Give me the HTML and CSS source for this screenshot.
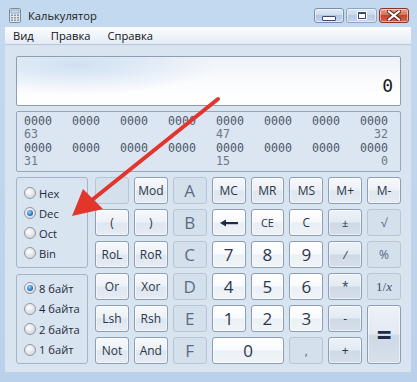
FILE: index.html
```html
<!DOCTYPE html>
<html lang="ru">
<head>
  <meta charset="UTF-8">
  <meta name="viewport" content="width=device-width, initial-scale=1.0">
  <link rel="stylesheet" href="styles.css">
  <title>Калькулятор</title>
</head>
<body>
  <div class="window">

    <!-- title bar -->
    <div class="titlebar">
      <svg class="app-icon" width="12" height="15" viewBox="0 0 12 15">
        <rect x="0.5" y="0.5" width="11" height="14" rx="1" fill="#dfe6ee" stroke="#7d8a99"/>
        <rect x="2" y="2" width="8" height="3" fill="#bfe0f7" stroke="#6f8aa6" stroke-width="0.6"/>
        <g fill="#8d99a8">
          <rect x="2" y="6.5" width="2" height="1.5"/><rect x="5" y="6.5" width="2" height="1.5"/><rect x="8" y="6.5" width="2" height="1.5"/>
          <rect x="2" y="9" width="2" height="1.5"/><rect x="5" y="9" width="2" height="1.5"/><rect x="8" y="9" width="2" height="1.5"/>
          <rect x="2" y="11.5" width="2" height="1.5"/><rect x="5" y="11.5" width="2" height="1.5"/><rect x="8" y="11.5" width="2" height="1.5"/>
        </g>
      </svg>
      <span class="title">Калькулятор</span>
      <div class="controls">
        <span class="ctl ctl-min"><i></i></span>
        <span class="ctl ctl-max"><i></i></span>
        <span class="ctl ctl-close">
          <svg width="14" height="11" viewBox="0 0 14 11">
            <path d="M2 1.5 L12 9.5 M12 1.5 L2 9.5" stroke="#5a1a12" stroke-width="4" stroke-linecap="square"/>
            <path d="M2 1.5 L12 9.5 M12 1.5 L2 9.5" stroke="#fff" stroke-width="2.2" stroke-linecap="square"/>
          </svg>
        </span>
      </div>
    </div>

    <div class="frame">
      <div class="menubar">
        <span>Вид</span>
        <span>Правка</span>
        <span>Справка</span>
      </div>

      <div class="client">
        <div class="display">0</div>

        <div class="bits">
          <span>0000</span><span>0000</span><span>0000</span><span>0000</span>
          <span>0000</span><span>0000</span><span>0000</span><span>0000</span>
          <span class="pos">63</span><span></span><span></span><span></span>
          <span class="pos">47</span><span></span><span></span><span class="pos end">32</span>
          <span>0000</span><span>0000</span><span>0000</span><span>0000</span>
          <span>0000</span><span>0000</span><span>0000</span><span>0000</span>
          <span class="pos">31</span><span></span><span></span><span></span>
          <span class="pos">15</span><span></span><span></span><span class="pos end">0</span>
        </div>

        <div class="keypad">
          <div class="group group-base">
            <label class="radio"><span class="dot"></span>Hex</label>
            <label class="radio checked"><span class="dot"></span>Dec</label>
            <label class="radio"><span class="dot"></span>Oct</label>
            <label class="radio"><span class="dot"></span>Bin</label>
          </div>
          <div class="group group-size">
            <label class="radio checked"><span class="dot"></span>8 байт</label>
            <label class="radio"><span class="dot"></span>4 байта</label>
            <label class="radio"><span class="dot"></span>2 байта</label>
            <label class="radio"><span class="dot"></span>1 байт</label>
          </div>

          <!-- row 1 -->
          <span class="key off"></span>
          <span class="key">Mod</span>
          <span class="key off hex">A</span>
          <span class="key">MC</span>
          <span class="key">MR</span>
          <span class="key">MS</span>
          <span class="key">M+</span>
          <span class="key">M-</span>

          <!-- row 2 -->
          <span class="key">(</span>
          <span class="key">)</span>
          <span class="key off hex">B</span>
          <span class="key light">
            <svg width="18" height="8" viewBox="0 0 18 8">
              <path d="M0 4 L6 0.5 L6 7.5 Z" fill="#1d2b45"/>
              <rect x="5" y="3" width="13" height="2.2" fill="#1d2b45"/>
            </svg>
          </span>
          <span class="key light small">CE</span>
          <span class="key light">C</span>
          <span class="key op small">±</span>
          <span class="key off">√</span>

          <!-- row 3 -->
          <span class="key">RoL</span>
          <span class="key">RoR</span>
          <span class="key off hex">C</span>
          <span class="key num">7</span>
          <span class="key num">8</span>
          <span class="key num">9</span>
          <span class="key op slash">/</span>
          <span class="key off">%</span>

          <!-- row 4 -->
          <span class="key">Or</span>
          <span class="key">Xor</span>
          <span class="key off hex">D</span>
          <span class="key num">4</span>
          <span class="key num">5</span>
          <span class="key num">6</span>
          <span class="key op">*</span>
          <span class="key off recip">1/<em>x</em></span>

          <!-- row 5 -->
          <span class="key">Lsh</span>
          <span class="key">Rsh</span>
          <span class="key off hex">E</span>
          <span class="key num">1</span>
          <span class="key num">2</span>
          <span class="key num">3</span>
          <span class="key op">-</span>
          <span class="key op equals">=</span>

          <!-- row 6 -->
          <span class="key">Not</span>
          <span class="key">And</span>
          <span class="key off hex">F</span>
          <span class="key num zero">0</span>
          <span class="key off">,</span>
          <span class="key op">+</span>
        </div>
      </div>
    </div>

    <!-- red pointer drawn over the window -->
    <svg class="pointer" width="417" height="382" viewBox="0 0 417 382">
      <line x1="218" y1="99" x2="92" y2="200" stroke="#e2352b" stroke-width="4" stroke-linecap="round"/>
      <polygon points="72,216 83,189 103,209" fill="#e2352b"/>
    </svg>
  </div>
</body>
</html>
```

FILE: styles.css
```css
html, body {
  margin: 0;
  padding: 0;
  background-color: #bcd3ec;
  font-family: "Open Sans", "Noto Sans", sans-serif;
}

.window {
  position: relative;
  width: 417px;
  height: 382px;
  background: linear-gradient(to bottom, #c3d9ef 0%, #b9d1ea 100%);
  overflow: hidden;
}

/* ---------- title bar ---------- */

.titlebar {
  height: 27px;
  display: flex;
  align-items: center;
  padding: 0 8px 0 9px;
  box-sizing: border-box;
}

.app-icon {
  margin-top: 4px;
  flex: none;
}

.title {
  margin-left: 7px;
  margin-top: 4px;
  font-size: 11.2px;
  color: #1b1b1b;
}

.controls {
  margin-left: auto;
  margin-top: 4px;
  display: flex;
  gap: 2px;
}

.ctl {
  width: 30px;
  height: 15px;
  box-sizing: border-box;
  border: 1px solid #7790b1;
  border-radius: 3px;
  display: flex;
  align-items: center;
  justify-content: center;
  background: linear-gradient(to bottom, #e1ebf6 0%, #cddcee 45%, #b2c7e1 50%, #c4d6ec 100%);
  box-shadow: inset 0 0 0 1px rgba(255, 255, 255, 0.5);
}

.ctl-max {
  width: 31px;
  background: linear-gradient(to bottom, #d9e5f2 0%, #cbdaea 45%, #b9cbe0 50%, #c5d5e8 100%);
  border-color: #8fa6c2;
}

.ctl-min i {
  display: block;
  width: 12px;
  height: 3px;
  margin-top: 5px;
  background: #fff;
  border: 1px solid #3b4d66;
  border-radius: 1px;
}

.ctl-max i {
  display: block;
  width: 6px;
  height: 4px;
  border: 1px solid #3b4d66;
  border-top-width: 2px;
  background: #fff;
  box-shadow: 0 0 0 1px #fff;
}

.ctl-close {
  border-color: #8a3326;
  background: linear-gradient(to bottom, #eaa08f 0%, #d9715b 45%, #c7422a 50%, #d4664d 100%);
}

/* ---------- frame + menu ---------- */

.frame {
  margin: 0 6px 0 5px;
  height: 345px;
  display: flex;
  flex-direction: column;
}

.menubar {
  height: 17px;
  display: flex;
  align-items: center;
  gap: 17px;
  padding-left: 8px;
  font-size: 11.2px;
  color: #111;
  background: linear-gradient(to bottom, #fbfcfe 0%, #eef3f9 60%, #e2eaf4 100%);
  border-bottom: 1px solid #b7c6d8;
}

.client {
  flex: 1;
  padding: 11px 10px 0 11px;
  background: #d9e4f1;
}

/* ---------- displays ---------- */

.display {
  height: 50px;
  box-sizing: border-box;
  border: 1px solid #8e9db0;
  border-radius: 2px;
  background:
    radial-gradient(ellipse 140px 30px at 60px 8px, rgba(200, 219, 240, 0.8), rgba(200, 219, 240, 0)),
    linear-gradient(to bottom, #eef3f9 0%, #fbfcfe 55%, #ffffff 100%);
  display: flex;
  align-items: flex-end;
  justify-content: flex-end;
  padding: 0 7px 9px 0;
  font-family: "DejaVu Sans Mono", monospace;
  font-size: 18px;
  color: #1a1a1a;
}

.bits {
  margin-top: 5px;
  height: 61px;
  box-sizing: border-box;
  border: 1px solid #97a7ba;
  border-radius: 2px;
  background: #dce6f2;
  padding: 3px 0 0 7px;
  display: grid;
  grid-template-columns: repeat(8, 28px);
  column-gap: 20px;
  grid-auto-rows: 13.3px;
  font-family: "DejaVu Sans Mono", monospace;
  font-size: 11.6px;
  line-height: 13px;
  color: #4d5868;
}

.bits .pos {
  color: #6c7684;
}

.bits .end {
  text-align: right;
}

/* ---------- keypad ---------- */

.keypad {
  margin-top: 5px;
  display: grid;
  grid-template-columns: 74px repeat(8, 1fr);
  grid-template-rows: repeat(6, 27px);
  column-gap: 5px;
  row-gap: 5px;
}

.group {
  grid-column: 1;
  width: 72px;
  box-sizing: border-box;
  border: 1px solid #a4b3c6;
  border-radius: 3px;
  display: flex;
  flex-direction: column;
  padding-left: 7px;
}

.group-base {
  grid-row: 1 / span 3;
  padding-top: 5px;
}

.group-size {
  grid-row: 4 / span 3;
  margin-top: 1px;
  padding-top: 3px;
}

.radio {
  height: 20px;
  display: flex;
  align-items: center;
  font-size: 11.2px;
  color: #1e2a3a;
}

.group-size .radio {
  height: 20.5px;
}

.dot {
  width: 12px;
  height: 12px;
  box-sizing: border-box;
  border-radius: 50%;
  border: 1px solid #8e98a6;
  background: radial-gradient(circle at 40% 35%, #ffffff 0%, #e6e8eb 45%, #c6cbd2 100%);
  margin-right: 3px;
  flex: none;
  position: relative;
}

.radio.checked .dot::after {
  content: "";
  position: absolute;
  left: 2px;
  top: 2px;
  width: 6px;
  height: 6px;
  border-radius: 50%;
  background: radial-gradient(circle at 40% 35%, #9fd3fb 0%, #2f7fcc 55%, #1a4e8c 100%);
}

.key {
  box-sizing: border-box;
  border: 1px solid #8d9eb4;
  border-radius: 3px;
  background: linear-gradient(to bottom, #f6f9fc 0%, #ecf1f7 48%, #dee6f0 52%, #e5ecf4 100%);
  box-shadow: inset 0 0 0 1px rgba(255, 255, 255, 0.55);
  display: flex;
  align-items: center;
  justify-content: center;
  font-size: 12px;
  color: #2a3647;
}

.key.light {
  background: linear-gradient(to bottom, #ffffff 0%, #f6f8fb 48%, #e9eef5 52%, #eff3f8 100%);
}

.key.num {
  background: linear-gradient(to bottom, #ffffff 0%, #f8fafd 48%, #ebf0f6 52%, #f1f5f9 100%);
  font-size: 17px;
  color: #2d3748;
}

.key.op {
  background: linear-gradient(to bottom, #edf2f8 0%, #e3eaf3 48%, #ced9e6 52%, #d6e0eb 100%);
}

.key.small {
  font-size: 11px;
}

.key.slash {
  font-style: italic;
  font-size: 11px;
}

.key.off {
  background: #d5e0ed;
  border-color: #b7c5d6;
  box-shadow: none;
  color: #55667c;
}

.key.hex {
  font-size: 17px;
  color: #5b6c82;
}

.key.recip {
  font-family: "Liberation Serif", serif;
  font-size: 13px;
  color: #3b4a5e;
}

.key.recip em {
  font-style: italic;
}

.key.equals {
  grid-column: 9;
  grid-row: 5 / span 2;
  font-size: 26px;
  font-weight: bold;
  color: #1d2b45;
}

.key.zero {
  grid-column: span 2;
}

/* ---------- overlay ---------- */

.pointer {
  position: absolute;
  left: 0;
  top: 0;
  pointer-events: none;
}
```
